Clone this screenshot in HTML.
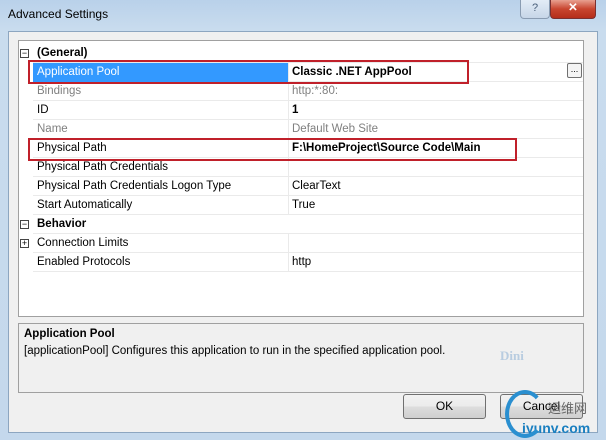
<!DOCTYPE html>
<html><head><style>
*{margin:0;padding:0;box-sizing:border-box}
body{width:606px;height:440px;overflow:hidden;font-family:"Liberation Sans",sans-serif;font-size:11.5px;position:relative;background:linear-gradient(#b9d1ea,#c9dcee 30px,#c4d8ec);}
.a{position:absolute}
.t{left:8px;top:7px;font-size:12px;color:#000}
.client{left:8px;top:31px;width:590px;height:402px;background:#f0f0f0;border:1px solid #8da6c0}
.grid{left:18px;top:40px;width:566px;height:277px;background:#fff;border:1px solid #a0a0a0}
.row{position:absolute;left:14px;width:550px;height:19px;border-bottom:1px solid #eaeaea;line-height:19px}
.row .k{position:absolute;left:4px}
.row .v{position:absolute;left:259px}
.row:after{content:"";position:absolute;left:255px;top:0;height:19px;border-left:1px solid #eaeaea}
.cat:after{display:none}
.g{color:#808080}
.b{font-weight:bold}
.box{position:absolute;left:-13px;top:5px;width:9px;height:9px;border:1px solid #444;font-size:9px;line-height:7px;text-align:center}
.red{border:2px solid #c0202a}
.desc{left:18px;top:323px;width:566px;height:70px;border:1px solid #a0a0a0;background:#f0f0f0}
.btn{top:394px;width:83px;height:25px;border:1px solid #707070;border-radius:3px;background:linear-gradient(#f2f2f2,#ebebeb 50%,#dddddd 51%,#cfcfcf);text-align:center;line-height:23px;font-size:12px}
</style></head><body>
<div class="a t">Advanced Settings</div>
<div class="a" style="left:520px;top:0;width:30px;height:19px;border:1px solid #8a9cb2;border-top:none;border-radius:0 0 4px 4px;background:linear-gradient(#e3ecf6,#c7d6e8);text-align:center;font-size:11px;color:#4a5f7a;line-height:17px">?</div>
<div class="a" style="left:550px;top:0;width:46px;height:19px;border:1px solid #7a3030;border-top:none;border-radius:0 0 4px 4px;background:linear-gradient(#e8a090,#c8452f 50%,#b52d1a);text-align:center;color:#fff;font-weight:bold;line-height:17px">✕</div>
<div class="a client"></div>
<div class="a grid">
 <div class="row cat" style="top:3px;left:14px;background:#fff"><span class="box">−</span><span class="k b">(General)</span></div>
 <div class="row" style="top:22px"><span class="k" style="left:0;width:255px;background:#3399ff;color:#fff;padding-left:4px;height:19px">Application Pool</span><span class="v b">Classic .NET AppPool</span></div>
 <div class="row" style="top:41px"><span class="k g">Bindings</span><span class="v g">http:*:80:</span></div>
 <div class="row" style="top:60px"><span class="k">ID</span><span class="v b">1</span></div>
 <div class="row" style="top:79px"><span class="k g">Name</span><span class="v g">Default Web Site</span></div>
 <div class="row" style="top:98px"><span class="k">Physical Path</span><span class="v b">F:\HomeProject\Source Code\Main</span></div>
 <div class="row" style="top:117px"><span class="k">Physical Path Credentials</span></div>
 <div class="row" style="top:136px"><span class="k">Physical Path Credentials Logon Type</span><span class="v">ClearText</span></div>
 <div class="row" style="top:155px"><span class="k">Start Automatically</span><span class="v">True</span></div>
 <div class="row cat" style="top:174px"><span class="box">−</span><span class="k b">Behavior</span></div>
 <div class="row" style="top:193px"><span class="box">+</span><span class="k">Connection Limits</span></div>
 <div class="row" style="top:212px"><span class="k">Enabled Protocols</span><span class="v">http</span></div>
 <div class="a" style="left:548px;top:22px;width:15px;height:15px;border:1px solid #707070;border-radius:2px;background:#f4f4f4;font-size:9px;text-align:center;line-height:11px">...</div>
</div>
<div class="a red" style="left:28px;top:60px;width:441px;height:24px"></div>
<div class="a red" style="left:28px;top:138px;width:489px;height:23px"></div>
<div class="a desc">
 <div class="a b" style="left:5px;top:4px">Application Pool</div>
 <div class="a" style="left:5px;top:21px">[applicationPool] Configures this application to run in the specified application pool.</div>
 <div class="a" style="left:481px;top:24px;color:#b8cce0;font-family:'Liberation Serif',serif;font-weight:bold;font-size:13px">Dini</div>
</div>
<div class="a btn" style="left:403px">OK</div>
<div class="a btn" style="left:500px">Cancel</div>
<div class="a" style="left:548px;top:398px;color:#666;font-size:13px;font-family:'Liberation Sans','Noto Sans CJK SC',sans-serif">运维网</div>
<div class="a" style="left:522px;top:420px;color:#1a7fc0;font-size:14px;font-weight:bold">iyunv.com</div>
<div class="a" style="left:505px;top:390px;width:40px;height:48px;border:4px solid #2a8fd0;border-right-color:transparent;border-radius:50%"></div>
</body></html>
